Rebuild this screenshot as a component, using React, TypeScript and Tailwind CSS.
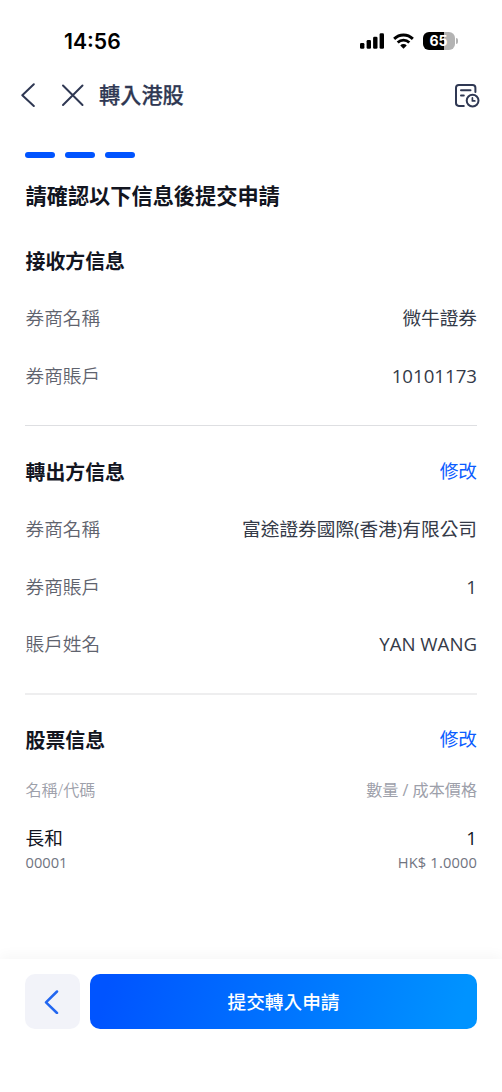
import type { ReactNode } from 'react';

function SignalIcon() {
  return (
    <svg width="24" height="16" viewBox="0 0 24 16" fill="#000">
      <rect x="0" y="10" width="4.4" height="5.8" rx="1.3" />
      <rect x="6.6" y="7" width="4.4" height="8.8" rx="1.3" />
      <rect x="13.1" y="3.8" width="4.4" height="12" rx="1.3" />
      <rect x="19.6" y="0.2" width="4.4" height="15.6" rx="1.3" />
    </svg>
  );
}

function WifiIcon() {
  return (
    <svg width="21" height="16" viewBox="0 0 22 16" fill="none" stroke="#000" strokeWidth="3">
      <path d="M1.2 5.8C6.8 0.4 15.2 0.4 20.8 5.8" />
      <path d="M4.9 9.6C8.4 6.3 13.6 6.3 17.1 9.6" />
      <path d="M11 16L7.6 12.6C9.5 10.8 12.5 10.8 14.4 12.6Z" fill="#000" stroke="none" />
    </svg>
  );
}

function Battery() {
  return (
    <div className="flex items-center gap-px">
      <div className="flex h-[18px] w-[32px] items-center justify-center rounded-[6px] bg-[linear-gradient(90deg,#000_65%,#b3b3b3_65%)] pr-px font-['Inter',sans-serif] text-[14px] leading-none font-bold text-white">
        65
      </div>
      <div className="h-[6px] w-[2px] rounded-r-full bg-[#b3b3b3]" />
    </div>
  );
}

function RecordsIcon() {
  return (
    <svg width="26" height="26" viewBox="0 0 26 26" fill="none" stroke="#2f3853" strokeWidth="2" strokeLinecap="round" strokeLinejoin="round">
      <path d="M9.8 22.9H4.8Q2 22.9 2 20.1V4.8Q2 2 4.8 2H18.6Q21.4 2 21.4 4.8V9" />
      <path d="M7 7.3H16.5M7 12.4H9.8" />
      <circle cx="18.6" cy="17.6" r="5.9" />
      <path d="M18.4 14.9V17.9H20.8" strokeWidth="1.7" />
    </svg>
  );
}

function Heading({ children, action }: { children: ReactNode; action?: string }) {
  return (
    <div className="flex h-[57.5px] items-center justify-between">
      <h2 className="pt-[2px] pl-[0.5px] text-[19.9px] font-bold text-[#12151f]">{children}</h2>
      {action && <button className="text-[18.67px] text-[#0b5cff]">{action}</button>}
    </div>
  );
}

function Row({ label, value }: { label: string; value: string }) {
  return (
    <div className="flex h-[57.5px] items-center justify-between pt-px pl-[0.5px] text-[18.67px]">
      <span className="font-[350] text-[#5f636e]">{label}</span>
      <span className="text-[#343a48]">{value}</span>
    </div>
  );
}

export default function App() {
  return (
    <div className="flex h-[1092px] w-[502px] flex-col overflow-hidden bg-white font-['Open_Sans','Noto_Sans_CJK_TC',sans-serif] leading-none">
      <div className="flex h-[68px] items-center justify-between pt-[14px] pr-[44px] pl-[64px]">
        <span className="pt-px font-['Inter',sans-serif] text-[21.2px] font-semibold text-black">14:56</span>
        <div className="flex items-center gap-[9px]">
          <SignalIcon />
          <WifiIcon />
          <Battery />
        </div>
      </div>

      <header className="flex h-[54px] items-center pr-[22px] pl-[21px]">
        <svg width="15" height="24" viewBox="0 0 15 24" fill="none" stroke="#2f3853" strokeWidth="2" strokeLinecap="round" strokeLinejoin="round">
          <path d="M12.8 1.2L1.3 12.3L12.8 23" />
        </svg>
        <svg className="ml-[25px]" width="24" height="24" viewBox="0 0 24 24" fill="none" stroke="#2f3853" strokeWidth="2" strokeLinecap="round">
          <path d="M2 2.5L21.5 22M21.5 2.5L2 22" />
        </svg>
        <h1 className="ml-[14px] text-[21.2px] font-medium text-[#2f3853] [-webkit-text-stroke:0.25px_#2f3853]">轉入港股</h1>
        <div className="ml-auto pt-px">
          <RecordsIcon />
        </div>
      </header>

      <main className="flex-1 px-[25px]">
        <div className="flex gap-[10px] pt-[30px]">
          <div className="h-[6px] w-[30px] rounded-full bg-[#0054ff]" />
          <div className="h-[6px] w-[30px] rounded-full bg-[#0054ff]" />
          <div className="h-[6px] w-[30px] rounded-full bg-[#0054ff]" />
        </div>
        <p className="mt-[14px] flex h-[48px] items-center pl-[0.5px] text-[21.2px] font-bold text-[#12151f]">請確認以下信息後提交申請</p>

        <section className="mt-[12px] border-b border-[#dedfe2] pb-[20.5px]">
          <Heading>接收方信息</Heading>
          <Row label="券商名稱" value="微牛證券" />
          <Row label="券商賬戶" value="10101173" />
        </section>

        <section className="mt-[17px] border-b-2 border-[#eeeeef] pb-[20px]">
          <Heading action="修改">轉出方信息</Heading>
          <Row label="券商名稱" value="富途證券國際(香港)有限公司" />
          <Row label="券商賬戶" value="1" />
          <Row label="賬戶姓名" value="YAN WANG" />
        </section>

        <section className="mt-[16px]">
          <Heading action="修改">股票信息</Heading>
          <div className="flex h-[43px] items-center justify-between pl-[0.5px] text-[16.1px] text-[#9da0aa]">
            <span className="font-[350]">名稱/代碼</span>
            <span>數量 / 成本價格</span>
          </div>
          <div className="mt-[11px] flex h-[30px] items-center justify-between pt-px pl-[0.5px] text-[18.67px] text-[#12151f]">
            <span>長和</span>
            <span>1</span>
          </div>
          <div className="flex h-[20px] items-center justify-between pl-[0.5px] text-[14.67px] text-[#70747f]">
            <span>00001</span>
            <span className="tracking-[0.15px]">HK$ 1.0000</span>
          </div>
        </section>
      </main>

      <footer className="flex h-[133px] items-start gap-[10px] bg-white px-[25px] pt-[15px] shadow-[0_-4px_12px_rgba(0,0,0,0.035)]">
        <button className="flex h-[55px] w-[55px] items-center justify-center rounded-[10px] bg-[#f2f3f9]">
          <svg className="-ml-[3px]" width="15" height="24" viewBox="0 0 15 24" fill="none" stroke="#2266f0" strokeWidth="2.5" strokeLinecap="round" strokeLinejoin="round">
            <path d="M13 1.5L2 12.3L13 23" />
          </svg>
        </button>
        <button className="h-[55px] flex-1 rounded-[10px] bg-[linear-gradient(105deg,#0054ff_5%,#0093ff_95%)] pt-px text-[18.67px] font-medium text-white">
          提交轉入申請
        </button>
      </footer>
    </div>
  );
}
